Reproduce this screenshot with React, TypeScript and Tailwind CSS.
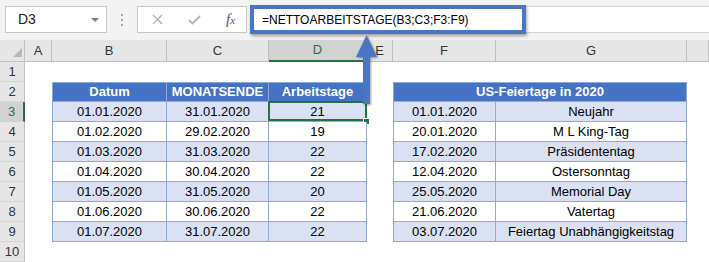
import React from "react";

const data1 = [
  ["01.01.2020", "31.01.2020", "21"],
  ["01.02.2020", "29.02.2020", "19"],
  ["01.03.2020", "31.03.2020", "22"],
  ["01.04.2020", "30.04.2020", "22"],
  ["01.05.2020", "31.05.2020", "20"],
  ["01.06.2020", "30.06.2020", "22"],
  ["01.07.2020", "31.07.2020", "22"],
];

const data2 = [
  ["01.01.2020", "Neujahr"],
  ["20.01.2020", "M L King-Tag"],
  ["17.02.2020", "Präsidententag"],
  ["12.04.2020", "Ostersonntag"],
  ["25.05.2020", "Memorial Day"],
  ["21.06.2020", "Vatertag"],
  ["03.07.2020", "Feiertag Unabhängigkeitstag"],
];

const colLetters = ["A", "B", "C", "D", "E", "F", "G", ""];

const hdrCell =
  "flex items-center justify-center bg-[#4472c4] text-white font-bold border-t border-r border-b border-[#8eaadb]";
const dataBase = "flex items-center justify-center border-r border-b border-[#8eaadb]";

function Toolbar() {
  return (
    <div className="relative h-10 bg-[#f3f3f3] flex items-start pt-[6px] pl-[5px]">
      <div className="w-[102px] h-[27px] bg-white border border-[#c6c6c6] flex items-center justify-between pl-[12px] pr-[7px] text-[14px] text-[#222]">
        <span>D3</span>
        <span className="w-0 h-0 border-l-[4px] border-r-[4px] border-t-[4px] border-l-transparent border-r-transparent border-t-[#808080]" />
      </div>
      <div className="w-[30px] h-[27px] flex flex-col items-center justify-center gap-[3px]">
        <span className="w-[2px] h-[2px] bg-[#a8a8a8]" />
        <span className="w-[2px] h-[2px] bg-[#a8a8a8]" />
        <span className="w-[2px] h-[2px] bg-[#a8a8a8]" />
      </div>
      <div className="w-[110px] h-[27px] bg-white border border-[#c6c6c6] flex items-center">
        <svg className="ml-[14px]" width="11" height="11" viewBox="0 0 11 11">
          <path d="M1 1L10 10M10 1L1 10" stroke="#b5b5b5" strokeWidth="1.4" fill="none" />
        </svg>
        <svg className="ml-[25px]" width="13" height="10" viewBox="0 0 13 10">
          <path d="M1 5L4.5 8.5L12 1" stroke="#b5b5b5" strokeWidth="1.8" fill="none" />
        </svg>
        <span className="ml-[25px] italic text-[#555] font-['Liberation_Serif',serif] text-[15px] leading-none">
          f<span className="text-[11px]">x</span>
        </span>
      </div>
      <div className="ml-[3px] flex-1 h-[27px] bg-white border-y border-l border-[#d4d4d4] flex items-center pl-[11px] text-[12px] text-black">
        =NETTOARBEITSTAGE(B3;C3;F3:F9)
      </div>
      <div className="absolute left-[250px] top-[5px] w-[276px] h-[29px] border-[4px] border-[#4a74c4] shadow-[1px_2px_3px_rgba(0,0,0,0.35)]" />
    </div>
  );
}

function Sheet() {
  const rows = [];
  for (let r = 1; r <= 10; r++) {
    const cells = [];
    const sel = r === 3;
    cells.push(
      <div
        key="rh"
        className={
          sel
            ? "flex items-center justify-center bg-[#d2d2d2] border-r-2 border-r-[#217346] border-b border-b-[#d0d0d0] text-[#217346] text-[13px]"
            : "flex items-center justify-center bg-[#e6e6e6] border-r border-r-[#c0c0c0] border-b border-b-[#d6d6d6] text-[#333] text-[13px]"
        }
      >
        {r}
      </div>
    );
    // A
    cells.push(<div key="A" />);
    // B C D
    if (r === 2) {
      cells.push(<div key="B" className={hdrCell + " border-l"}>Datum</div>);
      cells.push(<div key="C" className={hdrCell}>MONATSENDE</div>);
      cells.push(<div key="D" className={hdrCell}>Arbeitstage</div>);
    } else if (r >= 3 && r <= 9) {
      const row = data1[r - 3];
      const bg = r % 2 === 1 ? " bg-[#d9e1f2]" : " bg-white";
      cells.push(<div key="B" className={dataBase + bg + " border-l"}>{row[0]}</div>);
      cells.push(<div key="C" className={dataBase + bg}>{row[1]}</div>);
      cells.push(
        <div key="D" className={dataBase + bg + " relative"}>
          {row[2]}
          {sel && (
            <>
              <div className="absolute -left-[1px] -top-[1px] -right-[1px] bottom-0 border-2 border-[#217346]" />
              <div className="absolute -right-[4px] -bottom-[4px] w-[7px] h-[7px] bg-[#217346] border border-white" />
            </>
          )}
        </div>
      );
    } else {
      cells.push(<div key="B" />, <div key="C" />, <div key="D" />);
    }
    // E
    cells.push(<div key="E" />);
    // F G
    if (r === 2) {
      cells.push(
        <div key="FG" className={hdrCell + " border-l col-span-2"}>
          US-Feiertage in 2020
        </div>
      );
    } else if (r >= 3 && r <= 9) {
      const row = data2[r - 3];
      const bg = r % 2 === 1 ? " bg-[#d9e1f2]" : " bg-white";
      cells.push(<div key="F" className={dataBase + bg + " border-l"}>{row[0]}</div>);
      cells.push(<div key="G" className={dataBase + bg}>{row[1]}</div>);
    } else {
      cells.push(<div key="F" />, <div key="G" />);
    }
    cells.push(<div key="H" />);
    rows.push(...cells.map((c, i) => React.cloneElement(c, { key: `${r}-${i}` })));
  }

  return (
    <div className="grid grid-cols-[25px_27px_115px_102px_98px_26px_103px_191px_22px] grid-rows-[22px_repeat(10,20px)] text-[13px] text-black">
      <div className="bg-[#e6e6e6] border-r border-b border-[#c0c0c0] flex items-end justify-end pr-[2px] pb-[4px]">
        <svg width="9" height="9" viewBox="0 0 9 9">
          <path d="M9 0L9 9L0 9Z" fill="#b8b8b8" />
        </svg>
      </div>
      {colLetters.map((l) =>
        l === "D" ? (
          <div
            key={l}
            className="flex items-center justify-center bg-[#d2d2d2] border-r border-r-[#c0c0c0] border-b-2 border-b-[#217346] text-[#217346] text-[13px]"
          >
            {l}
          </div>
        ) : (
          <div
            key={l || "H"}
            className="flex items-center justify-center bg-[#e6e6e6] border-r border-b border-[#c0c0c0] text-[#333] text-[13px]"
          >
            {l}
          </div>
        )
      )}
      {rows}
    </div>
  );
}

function Arrow() {
  return (
    <svg
      className="absolute left-[354px] top-[33px] drop-shadow-[1px_1px_1px_rgba(0,0,0,0.4)]"
      width="26"
      height="74"
      viewBox="0 0 26 74"
    >
      <path d="M12.5 2L23 24L16 24L16 71L9 71L9 24L2 24Z" fill="#4a74c4" />
    </svg>
  );
}

export default function App() {
  return (
    <div className="relative w-[709px] h-[262px] overflow-hidden bg-white font-['Liberation_Sans',Arial,sans-serif]">
      <Toolbar />
      <Sheet />
      <Arrow />
    </div>
  );
}
